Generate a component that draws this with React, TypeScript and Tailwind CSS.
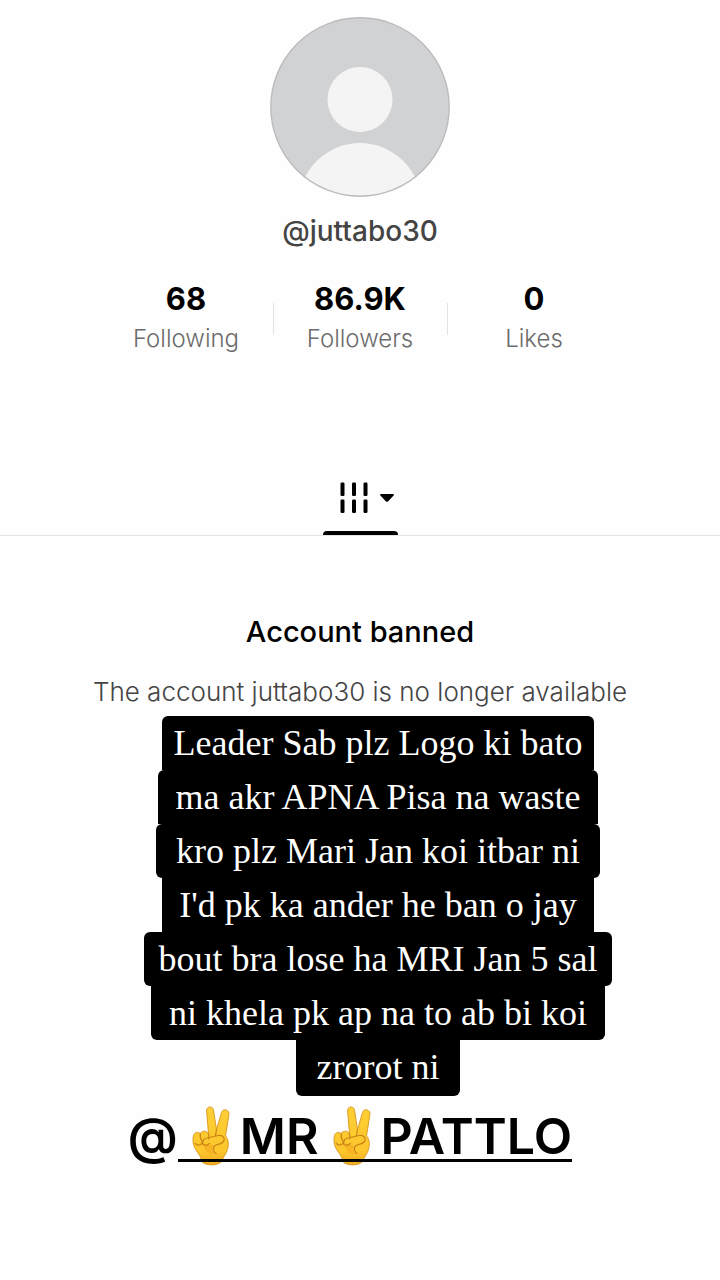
import React from 'react';

const stats = [
  { value: '68', label: 'Following' },
  { value: '86.9K', label: 'Followers' },
  { value: '0', label: 'Likes' },
];

// each row of the caption has its own plate, only the outer corners are rounded
const captionLines = [
  { text: 'Leader Sab plz Logo ki bato', plate: 'w-[432px] rounded-t-md' },
  { text: 'ma akr APNA Pisa na waste', plate: 'w-[440px] rounded-t-md' },
  { text: 'kro plz Mari Jan koi itbar ni', plate: 'w-[444px] rounded-md' },
  { text: "I'd pk ka ander he ban o jay", plate: 'w-[432px]' },
  { text: 'bout bra lose ha MRI Jan 5 sal', plate: 'w-[468px] rounded-md' },
  { text: 'ni khela pk ap na to ab bi koi', plate: 'w-[454px] rounded-b-md' },
  { text: 'zrorot ni', plate: 'w-[164px] rounded-b-md pb-0.5' },
];

const Avatar = () => (
  <svg viewBox="0 0 180 180" className="size-[180px]" role="img" aria-label="Profile photo">
    <defs>
      <clipPath id="avatar-clip">
        <circle cx="90" cy="90" r="89" />
      </clipPath>
    </defs>
    <circle cx="90" cy="90" r="89" fill="#d0d2d4" />
    <g clipPath="url(#avatar-clip)" fill="#f4f4f4">
      <circle cx="90" cy="82.5" r="32.5" />
      <circle cx="90" cy="187" r="61" />
    </g>
    <circle cx="90" cy="90" r="89.2" fill="none" stroke="#bcbabd" strokeWidth="1.4" />
  </svg>
);

const GridIcon = () => (
  <svg viewBox="0 0 28 32" className="w-7 h-8" fill="currentColor" aria-hidden="true">
    {[0, 11.5, 23].map((x) => (
      <g key={x}>
        <rect x={x + 0.5} y="0.5" width="4" height="13.5" rx="1.2" />
        <rect x={x + 0.5} y="17.5" width="4" height="13.5" rx="1.2" />
      </g>
    ))}
  </svg>
);

const VictoryHand = () => (
  <svg viewBox="0 0 38 60" className="ml-3.5 mr-2.5 w-[38px] h-[60px]" role="img" aria-label="Victory hand">
    <defs>
      <linearGradient id="skin" x1="0" y1="0" x2="0" y2="60" gradientUnits="userSpaceOnUse">
        <stop offset="0" stopColor="#fdd035" />
        <stop offset="0.75" stopColor="#fcc62c" />
        <stop offset="1" stopColor="#efa920" />
      </linearGradient>
    </defs>
    <g fill="url(#skin)" stroke="#d8941f" strokeWidth="0.9" strokeLinejoin="round">
      <path d="M16.500 28 14.600 5C14.500 2.500 16 1 18 1s3.300 1.300 3.600 3.700L24.500 23.500 29.500 6.500C30.200 4.300 32 3.300 34 3.900 36.300 4.600 37.300 6.300 36.900 8.700L33.500 30C36.500 33 37 38 35.500 43.500 34.300 48 31 51 29.500 55.500 26 60 13 60 9.800 55.500 9.500 50.500 5 46.500 2.500 41.500 0.800 37.500 0.600 33 1.500 29.500 2.500 26.200 5.800 25.500 8.300 27.500 10 24.400 15 24.300 16.500 28Z" />
    </g>
    <path d="M10.800 37.500C14 39.500 18 38.500 21.500 39.500 19.500 43 20.500 46 23.500 48 17 49.500 12.500 44.500 10.800 37.500Z" fill="#f5ab20" opacity="0.7" />
    <g fill="none" stroke="#ca8217" strokeWidth="1.2" strokeLinecap="round" strokeLinejoin="round">
      <path d="M8.300 27.500C7.800 30.500 8.800 33.500 10.500 36 9.500 39 6.500 40.500 3.200 37.500" />
      <path d="M16.500 28C17.500 30 17.200 31.500 16.500 33" />
      <path d="M11 38.500C9.500 34.500 12.500 31.800 17.500 31.500L26 29.500C30 29 33 31 32 34.500 31 38 25.500 38 23 39.500 20.500 41.500 21 45.500 24 47.500" />
      <path d="M11 38.500C13 39.800 15.500 39 17.500 37.500" />
      <path d="M24.500 23.500 23.500 29.500" />
    </g>
  </svg>
);

export default function App() {
  return (
    <main className="min-h-screen bg-[#fefefe] pt-[17px] text-black font-['Inter','Noto_Sans',sans-serif]">
      <header className="flex flex-col items-center">
        <Avatar />
        <h1 className="mt-4 text-[28px] leading-9 font-medium text-[#444]">@juttabo30</h1>

        <div className="mt-8 flex items-center">
          {stats.map((stat, i) => (
            <React.Fragment key={stat.label}>
              {i > 0 && <span className="h-8 w-px bg-[#e3e3e3]" />}
              <div className="flex w-[173px] flex-col items-center">
                <strong className="text-[31px] leading-9 font-bold">{stat.value}</strong>
                <span className="mt-1 text-[24px] leading-9 font-light text-[#6c6c6c]">{stat.label}</span>
              </div>
            </React.Fragment>
          ))}
        </div>
      </header>

      <nav className="mt-[125px] flex justify-center border-b border-[#e4e4e4]">
        <button type="button" aria-label="Videos" className="flex w-[75px] flex-col items-center">
          <span className="flex items-center gap-3 pl-3.5">
            <GridIcon />
            <svg viewBox="0 0 14 8" className="w-3.5 h-2" fill="currentColor" aria-hidden="true">
              <path d="M1 0h12c1 0 1.200.8.600 1.400L8 7.400c-.6.6-1.400.6-2 0L.4 1.400C-.2.8 0 0 1 0Z" />
            </svg>
          </span>
          <span className="mt-[17px] h-1 w-full rounded-t bg-black" />
        </button>
      </nav>

      <section className="mt-[78px] flex flex-col items-center">
        <h2 className="text-[29px] leading-9 font-medium">Account banned</h2>
        <p className="mt-6 text-[26px] leading-9 font-light text-[#444] whitespace-nowrap">
          The account juttabo30 is no longer available
        </p>
      </section>

      <div className="mt-1.5 ml-9 flex flex-col items-center text-center text-white font-['Liberation_Serif',serif]">
        {captionLines.map(({ text, plate }) => (
          <p key={text} className={`bg-black text-[36px] leading-[54px] whitespace-nowrap ${plate}`}>
            {text}
          </p>
        ))}
      </div>

      <div className="mt-2.5 mr-5 flex justify-center text-[50px] leading-[60px] font-semibold">
        <span>@</span>
        <a href="#mr-pattlo" className="relative flex items-center">
          <VictoryHand />
          <span>MR</span>
          <VictoryHand />
          <span>PATTLO</span>
          <span className="absolute inset-x-0 bottom-1 h-[3px] bg-black" />
        </a>
      </div>
    </main>
  );
}
